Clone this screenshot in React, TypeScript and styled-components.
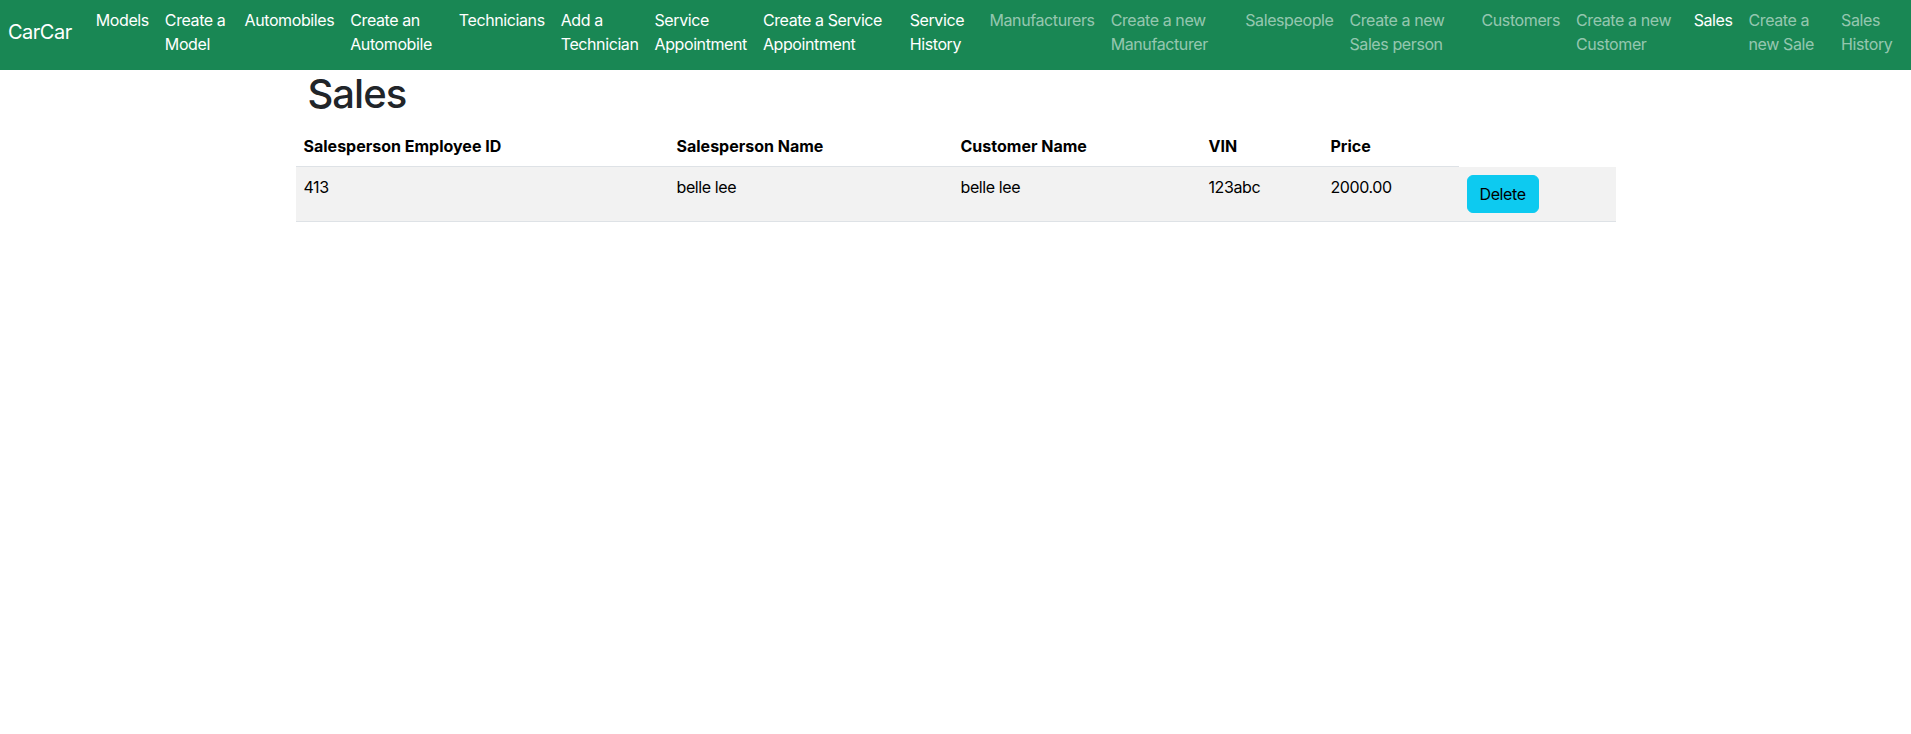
import React from "react";
import styled, { createGlobalStyle } from "styled-components";

const FONT = `Inter, Roboto, "Liberation Sans", sans-serif`;

const GlobalStyle = createGlobalStyle`
  *, *::before, *::after { box-sizing: border-box; }
  body {
    margin: 0;
    font-family: ${FONT};
    font-size: 16px;
    line-height: 1.5;
    letter-spacing: -0.4px;
    color: #212529;
    background: #fff;
  }
`;

const NavBar = styled.nav`
  background: #198754;
  display: flex;
  align-items: center;
  height: 70px;
  padding: 0 8px 6px;
`;

const Brand = styled.a`
  font-size: 20px;
  line-height: 30px;
  letter-spacing: -0.5px;
  color: #fff;
  margin-right: 16px;
  padding: 5px 0;
  white-space: nowrap;
  text-decoration: none;
  flex-shrink: 0;
`;

const NavList = styled.ul`
  display: flex;
  flex: 1 1 auto;
  min-width: 0;
  list-style: none;
  margin: 0;
  padding: 0;
`;

const NavItem = styled.li`
  flex: 0 1 auto;
`;

const NavLink = styled.a<{ $muted?: boolean }>`
  display: block;
  padding: 8px 8px;
  color: ${(p) => (p.$muted ? "rgba(255,255,255,0.55)" : "#fff")};
  text-decoration: none;
`;

const Container = styled.main`
  max-width: 1320px;
  margin: 0 auto;
  padding: 0 12px;
`;

const Title = styled.h1`
  font-size: 40px;
  font-weight: 500;
  line-height: 1.2;
  letter-spacing: -1px;
  margin: 0 0 8px;
  color: #212529;
`;

const Table = styled.table`
  width: calc(100% + 24px);
  margin: 0 -12px;
  border-collapse: collapse;
  color: #000;
`;

const HeadCell = styled.th<{ $w: number }>`
  width: ${(p) => p.$w}px;
  text-align: left;
  font-weight: 700;
  letter-spacing: 0;
  padding: 8px;
  vertical-align: bottom;
  border-bottom: 1px solid #dee2e6;
`;

const Row = styled.tr<{ $striped?: boolean }>`
  background: ${(p) => (p.$striped ? "#f2f2f2" : "transparent")};
`;

const Cell = styled.td`
  padding: 8px;
  vertical-align: top;
  border-bottom: 1px solid #dee2e6;
`;

const DeleteButton = styled.button`
  font-family: ${FONT};
  font-size: 16px;
  line-height: 1.5;
  letter-spacing: -0.4px;
  padding: 6px 12px;
  background: #0dcaf0;
  border: 1px solid #0dcaf0;
  border-radius: 6px;
  color: #000;
  cursor: pointer;
`;

const links: { label: string; muted?: boolean }[] = [
  { label: "Models" },
  { label: "Create a Model" },
  { label: "Automobiles" },
  { label: "Create an Automobile" },
  { label: "Technicians" },
  { label: "Add a Technician" },
  { label: "Service Appointment" },
  { label: "Create a Service Appointment" },
  { label: "Service History" },
  { label: "Manufacturers", muted: true },
  { label: "Create a new Manufacturer", muted: true },
  { label: "Salespeople", muted: true },
  { label: "Create a new Sales person", muted: true },
  { label: "Customers", muted: true },
  { label: "Create a new Customer", muted: true },
  { label: "Sales" },
  { label: "Create a new Sale", muted: true },
  { label: "Sales History", muted: true },
];

const sales = [
  { id: "413", sp: "belle lee", cust: "belle lee", vin: "123abc", price: "2000.00" },
];

export default function App() {
  return (
    <>
      <GlobalStyle />
      <NavBar>
        <Brand href="#">CarCar</Brand>
        <NavList>
          {links.map((l) => (
            <NavItem key={l.label}>
              <NavLink href="#" $muted={l.muted}>
                {l.label}
              </NavLink>
            </NavItem>
          ))}
        </NavList>
      </NavBar>
      <Container>
        <Title>Sales</Title>
        <Table>
          <thead>
            <tr>
              <HeadCell $w={373}>Salesperson Employee ID</HeadCell>
              <HeadCell $w={284}>Salesperson Name</HeadCell>
              <HeadCell $w={248}>Customer Name</HeadCell>
              <HeadCell $w={122}>VIN</HeadCell>
              <HeadCell $w={136}>Price</HeadCell>
            </tr>
          </thead>
          <tbody>
            {sales.map((s) => (
              <Row key={s.id} $striped>
                <Cell>{s.id}</Cell>
                <Cell>{s.sp}</Cell>
                <Cell>{s.cust}</Cell>
                <Cell>{s.vin}</Cell>
                <Cell>{s.price}</Cell>
                <Cell>
                  <DeleteButton>Delete</DeleteButton>
                </Cell>
              </Row>
            ))}
          </tbody>
        </Table>
      </Container>
    </>
  );
}
